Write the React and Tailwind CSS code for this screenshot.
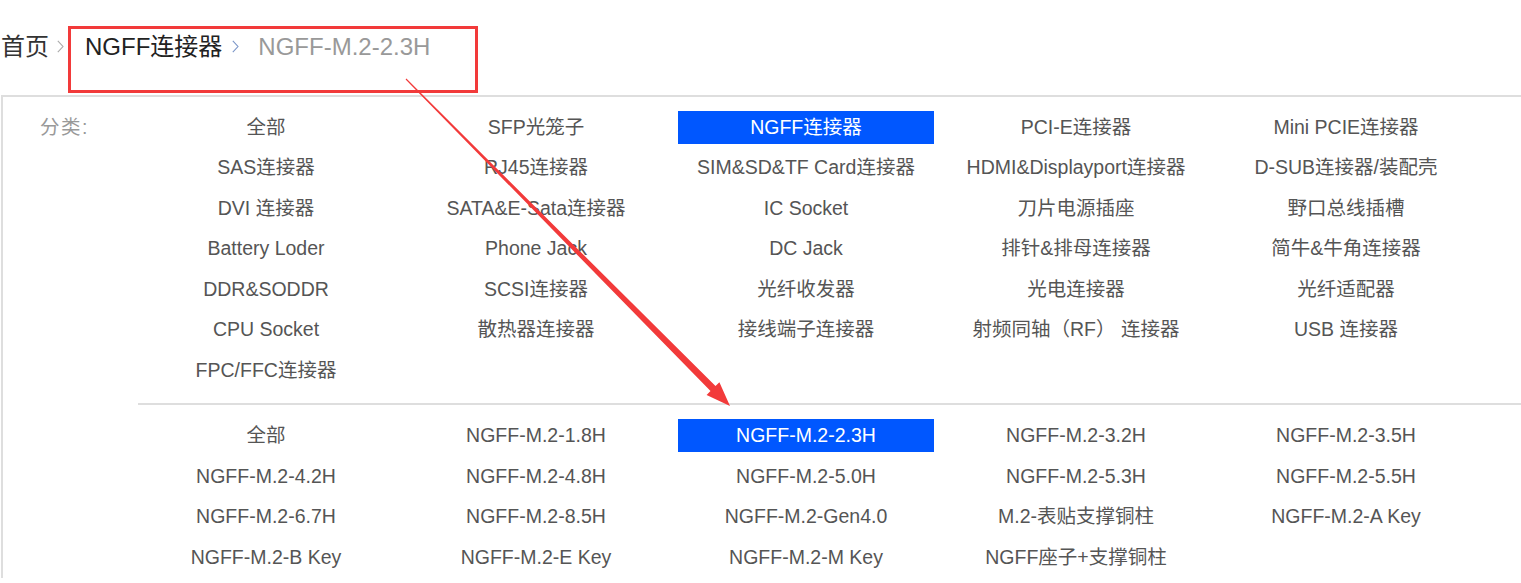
import React from 'react';

const FONT = { fontFamily: '"Liberation Sans", "Noto Sans CJK SC", sans-serif' };

const CATEGORIES = [
  '全部', 'SFP光笼子', 'NGFF连接器', 'PCI-E连接器', 'Mini PCIE连接器',
  'SAS连接器', 'RJ45连接器', 'SIM&SD&TF Card连接器', 'HDMI&Displayport连接器', 'D-SUB连接器/装配壳',
  'DVI 连接器', 'SATA&E-Sata连接器', 'IC Socket', '刀片电源插座', '野口总线插槽',
  'Battery Loder', 'Phone Jack', 'DC Jack', '排针&排母连接器', '简牛&牛角连接器',
  'DDR&SODDR', 'SCSI连接器', '光纤收发器', '光电连接器', '光纤适配器',
  'CPU Socket', '散热器连接器', '接线端子连接器', '射频同轴（RF） 连接器', 'USB 连接器',
  'FPC/FFC连接器',
];

const SUBTYPES = [
  '全部', 'NGFF-M.2-1.8H', 'NGFF-M.2-2.3H', 'NGFF-M.2-3.2H', 'NGFF-M.2-3.5H',
  'NGFF-M.2-4.2H', 'NGFF-M.2-4.8H', 'NGFF-M.2-5.0H', 'NGFF-M.2-5.3H', 'NGFF-M.2-5.5H',
  'NGFF-M.2-6.7H', 'NGFF-M.2-8.5H', 'NGFF-M.2-Gen4.0', 'M.2-表贴支撑铜柱', 'NGFF-M.2-A Key',
  'NGFF-M.2-B Key', 'NGFF-M.2-E Key', 'NGFF-M.2-M Key', 'NGFF座子+支撑铜柱',
];

function Chevron({ color }) {
  return (
    <svg width="7" height="13" viewBox="0 0 7 13" className="shrink-0">
      <polyline points="0.8,0.8 6,6.5 0.8,12.2" fill="none" stroke={color} strokeWidth="1.1" />
    </svg>
  );
}

function OptionGrid({ items, active }) {
  return (
    <div className="grid grid-cols-[repeat(5,270px)]">
      {items.map(name => (
        <div key={name} className="h-[40.5px] flex items-center">
          <span
            className={
              'mx-[7px] w-[256px] h-[33px] flex items-center justify-center whitespace-nowrap leading-none ' +
              (name === active ? 'bg-[#0057ff] text-white' : 'text-[#555]')
            }
          >
            {name}
          </span>
        </div>
      ))}
    </div>
  );
}

export default function App() {
  return (
    <div className="relative w-[1521px] h-[583px] overflow-hidden bg-white" style={FONT}>
      {/* 面包屑 */}
      <div className="h-[95px] flex items-center pl-[1px] pb-[2px] text-[24px] leading-none">
        <span className="text-[#333]">首页</span>
        <span className="ml-[8px] mr-[21px]"><Chevron color="#aaa" /></span>
        <span className="text-[#222]">NGFF连接器</span>
        <span className="ml-[10px] mr-[19px]"><Chevron color="#7b96c8" /></span>
        <span className="text-[#999]">NGFF-M.2-2.3H</span>
      </div>

      {/* 筛选面板 */}
      <div className="ml-[1px] border-t-2 border-l-2 border-[#dedede] flex text-[19.5px] pt-[10px]">
        <div className="w-[128px] pl-[37px] h-[40.5px] flex items-center text-[#999] leading-none tracking-[1.5px] shrink-0">
          分类:
        </div>
        <div>
          <OptionGrid items={CATEGORIES} active="NGFF连接器" />
          <div className="ml-[7px] w-[1400px] h-[2px] bg-[#dedede] mt-[12px] mb-[11px]" />
          <OptionGrid items={SUBTYPES} active="NGFF-M.2-2.3H" />
        </div>
      </div>

      {/* 标注 */}
      <div className="absolute left-[68px] top-[26px] w-[410px] h-[67px] border-[3px] border-[#f23a3a] pointer-events-none" />
      <svg className="absolute inset-0 pointer-events-none" width="1521" height="583">
        <polygon
          points="405.6,79.4 710.5,391.1 706.6,394.9 730,406 719.4,382.3 715.5,386.1 406.4,78.6"
          fill="#f23a3a"
        />
      </svg>
    </div>
  );
}
